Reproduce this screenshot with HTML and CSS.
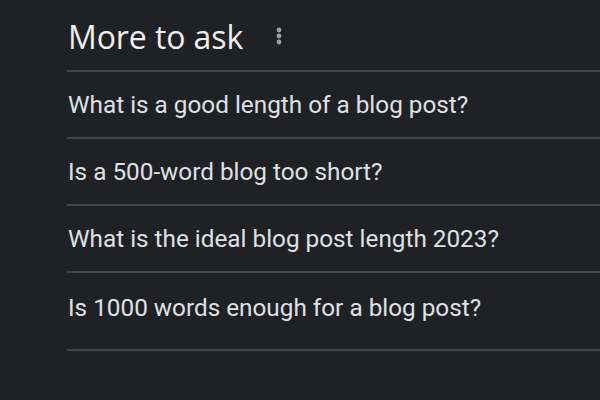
FILE: index.html
```html
<!DOCTYPE html>
<html>
<head>
<meta charset="utf-8">
<link rel="stylesheet" href="styles.css">
</head>
<body>
<div class="panel">
  <div class="header">
    <h2 class="title">More to ask</h2>
    <span class="more" aria-label="More options">
      <svg width="6" height="18" viewBox="0 0 6 18"><circle cx="3" cy="3" r="2.4" fill="#9aa0a6"/><circle cx="3" cy="9" r="2.4" fill="#9aa0a6"/><circle cx="3" cy="15" r="2.4" fill="#9aa0a6"/></svg>
    </span>
  </div>
  <div class="list">
    <div class="item">What is a good length of a blog post?</div>
    <div class="item">Is a 500-word blog too short?</div>
    <div class="item">What is the ideal blog post length 2023?</div>
    <div class="item last">Is 1000 words enough for a blog post?</div>
  </div>
</div>
</body>
</html>
```
FILE: styles.css
```css
html, body {
  margin: 0;
  padding: 0;
  background: #202124;
  width: 600px;
  height: 400px;
  overflow: hidden;
}
.panel {
  padding-left: 67px;
}
.header {
  height: 70px;
  display: flex;
  align-items: center;
  border-bottom: 2px solid #444548;
}
.title {
  margin: 0;
  margin-top: 2px;
  font-family: "Open Sans", "Noto Sans", sans-serif;
  font-weight: 400;
  font-size: 32px;
  color: #eeeff1;
  letter-spacing: -0.1px;
  width: 208px;
  padding-left: 1px;
}
.more {
  display: flex;
  margin-top: 2px;
}
.item {
  height: 65px;
  display: flex;
  align-items: center;
  border-bottom: 2px solid #444548;
  font-family: Roboto, "Liberation Sans", sans-serif;
  font-size: 24.3px;
  color: #dfe0e3;
  padding-left: 1px;
}
.item.last {
  box-sizing: border-box;
  height: 78px;
  align-items: flex-start;
  padding-top: 20px;
}
```
